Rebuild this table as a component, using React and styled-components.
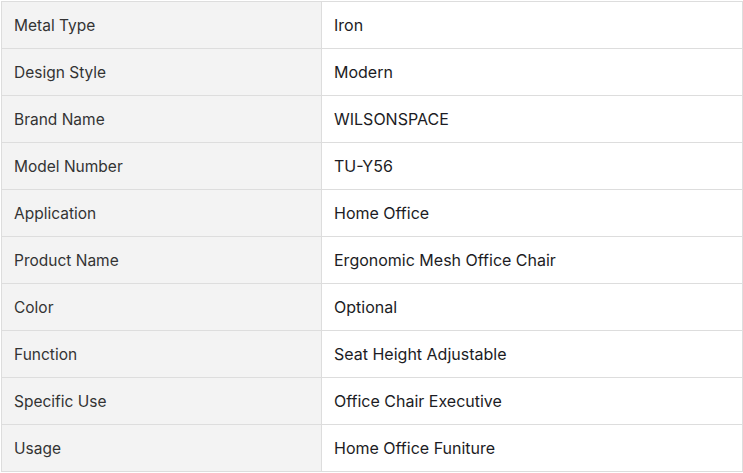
import styled, { createGlobalStyle } from "styled-components";

const GlobalStyle = createGlobalStyle`
  body {
    margin: 0;
    background: #fff;
    font-family: Inter, "Noto Sans", sans-serif;
  }
`;

const Page = styled.div`
  padding: 1px 1px 0 1px;
`;

const Table = styled.div`
  width: 741px;
  border-top: 1px solid #dddddd;
  border-left: 1px solid #dddddd;
`;

const Row = styled.div`
  display: grid;
  grid-template-columns: 320px 1fr;
  height: 47px;
`;

const Cell = styled.div`
  display: flex;
  align-items: center;
  padding: 0 12px;
  border-right: 1px solid #dddddd;
  border-bottom: 1px solid #dddddd;
  font-size: ${(p) => (p.$label ? "15.5px" : "16px")};
  background: ${(p) => (p.$label ? "#f3f3f3" : "#ffffff")};
  color: ${(p) => (p.$label ? "#333333" : "#1c1c24")};
`;

const specs = [
  ["Metal Type", "Iron"],
  ["Design Style", "Modern"],
  ["Brand Name", "WILSONSPACE"],
  ["Model Number", "TU-Y56"],
  ["Application", "Home Office"],
  ["Product Name", "Ergonomic Mesh Office Chair"],
  ["Color", "Optional"],
  ["Function", "Seat Height Adjustable"],
  ["Specific Use", "Office Chair Executive"],
  ["Usage", "Home Office Funiture"],
];

export default function App() {
  return (
    <Page>
      <GlobalStyle />
      <Table>
        {specs.map(([label, value]) => (
          <Row key={label}>
            <Cell $label>{label}</Cell>
            <Cell>{value}</Cell>
          </Row>
        ))}
      </Table>
    </Page>
  );
}
